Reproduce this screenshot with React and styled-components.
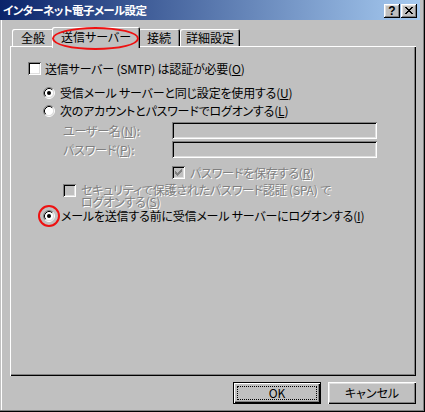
import React from 'react';
import styled, { createGlobalStyle } from 'styled-components';

const GlobalStyle = createGlobalStyle`
  html, body { margin: 0; padding: 0; background: #c0c0c0; }
  * { box-sizing: border-box; }
`;

const FONT = `"Noto Sans CJK JP", "Noto Sans", sans-serif`;

const Window = styled.div`
  width: 425px;
  height: 412px;
  background: #c0c0c0;
  box-shadow: inset -1px -1px 0 #000, inset -2px -2px 0 #808080, inset 1px 0 0 #c0c0c0, inset 2px 0 0 #fff;
  display: flex;
  flex-direction: column;
  font-family: ${FONT};
  font-size: 12px;
  font-feature-settings: "palt" 1;
  color: #000;
  overflow: hidden;
`;

const TitleBar = styled.div`
  height: 20px;
  margin-right: 5px;
  background: linear-gradient(to right, #0a246a, #a6caf0);
  display: flex;
  align-items: center;
  padding: 0 3px 0 3px;
  color: #fff;
  font-weight: bold;
  line-height: 20px;
`;

const TitleText = styled.span`
  flex: 1;
  font-size: 11.5px;
  letter-spacing: -0.6px;
`;

const CaptionGroup = styled.div`
  display: flex;
  gap: 1px;
  margin-top: 1px;
`;

const CaptionButton = styled.div`
  width: 16px;
  height: 14px;
  background: #c0c0c0;
  box-shadow: inset -1px -1px 0 #000, inset 1px 1px 0 #fff, inset -2px -2px 0 #808080, inset 2px 2px 0 #dfdfdf;
  display: flex;
  align-items: center;
  justify-content: center;
  color: #000;
  font-family: "Liberation Sans", sans-serif;
  font-weight: bold;
  font-size: 12px;
  line-height: 14px;
`;

const Body = styled.div`
  flex: 1;
  display: flex;
  flex-direction: column;
  padding: 7px 9px 0 10px;
`;

const TabRow = styled.div`
  display: flex;
  align-items: flex-start;
  height: 19px;
  padding-left: 2px;
`;

const Tab = styled.div`
  position: relative;
  z-index: ${p => (p.$active ? 2 : 1)};
  width: ${p => p.$w}px;
  height: ${p => (p.$active ? 21 : 17)}px;
  margin: ${p => (p.$active ? '0 -2px' : '2px 0 0 0')};
  background: #c0c0c0;
  border-radius: 2px 2px 0 0;
  box-shadow: inset 1px 1px 0 #fff, inset -1px 0 0 #000, inset -2px 0 0 #808080;
  display: flex;
  justify-content: center;
  padding-top: ${p => (p.$active ? 4 : 3)}px;
  line-height: 12px;
  white-space: nowrap;
`;

const TabEllipse = styled.div`
  position: absolute;
  left: 0;
  top: 0;
  width: 87px;
  height: 23px;
  border: 2px solid #ee1111;
  border-radius: 50%;
  pointer-events: none;
`;

const Panel = styled.div`
  width: 406px;
  height: 330px;
  background: #c0c0c0;
  box-shadow: inset 1px 1px 0 #fff, inset -1px -1px 0 #000, inset -2px -2px 0 #808080;
  padding-top: 16px;
  display: flex;
  flex-direction: column;
`;

const Row = styled.div`
  display: flex;
  align-items: ${p => (p.$top ? 'flex-start' : 'center')};
  min-height: ${p => p.$h || 13}px;
  margin-top: ${p => p.$mt || 0}px;
  padding-left: ${p => p.$indent}px;
  gap: ${p => (p.$gap != null ? p.$gap : 5)}px;
  line-height: 13px;
  white-space: nowrap;
`;

const Label = styled.span`
  color: ${p => (p.$disabled ? '#808080' : '#000')};
  text-shadow: ${p => (p.$disabled ? '1px 1px 0 #fff' : 'none')};
  width: ${p => (p.$w ? `${p.$w}px` : 'auto')};
  line-height: ${p => p.$lh || 13}px;
  letter-spacing: -0.2px;
`;

const CheckBox = styled.span`
  width: 13px;
  height: 13px;
  flex: none;
  display: block;
  background: ${p => (p.$disabled ? '#c0c0c0' : '#fff')};
  box-shadow: inset 1px 1px 0 #808080, inset -1px -1px 0 #fff, inset 2px 2px 0 #000, inset -2px -2px 0 #dfdfdf;
`;

const RadioWrap = styled.span`
  position: relative;
  display: block;
  width: 12px;
  height: 12px;
  flex: none;
`;

const RadioHighlight = styled.span`
  position: absolute;
  left: -5px;
  top: -5px;
  width: 22px;
  height: 22px;
  border: 2px solid #ee1111;
  border-radius: 50%;
`;

const TextField = styled.input`
  width: 205px;
  height: 17px;
  border: none;
  margin: 0;
  padding: 0;
  background: #c0c0c0;
  box-shadow: inset 1px 1px 0 #808080, inset -1px -1px 0 #fff, inset 2px 2px 0 #000, inset -2px -2px 0 #dfdfdf;
`;

const Footer = styled.div`
  display: flex;
  justify-content: flex-end;
  gap: 7px;
  margin-top: 6px;
`;

const Button = styled.button`
  position: relative;
  width: 88px;
  height: 22px;
  margin: 0;
  padding: 0;
  background: #c0c0c0;
  font-family: ${FONT};
  font-feature-settings: "palt" 1;
  font-size: 12px;
  line-height: 12px;
  color: #000;
  border: ${p => (p.$default ? '1px solid #000' : 'none')};
  box-shadow: ${p =>
    p.$default
      ? 'inset 1px 1px 0 #fff, inset -1px -1px 0 #000, inset -2px -2px 0 #808080'
      : 'inset 1px 1px 0 #fff, inset -1px -1px 0 #000, inset -2px -2px 0 #808080, inset 2px 2px 0 #dfdfdf'};
  &::after {
    content: '';
    display: ${p => (p.$default ? 'block' : 'none')};
    position: absolute;
    inset: 3px;
    border: 1px dotted #000;
  }
`;

const CheckMark = ({ color }) => (
  <svg width="13" height="13" viewBox="0 0 13 13" shapeRendering="crispEdges" style={{ display: 'block' }}>
    <path
      fill={color}
      d="M9 3h1v1h-1z M8 4h2v1h-2z M3 5h1v1h-1z M7 5h3v1h-3z M3 6h2v1h-2z M6 6h3v1h-3z M3 7h5v1h-5z M4 8h3v1h-3z M5 9h1v1h-1z"
    />
  </svg>
);

const Check = ({ checked, disabled }) => (
  <CheckBox $disabled={disabled}>{checked && <CheckMark color={disabled ? '#808080' : '#000'} />}</CheckBox>
);

const Radio = ({ checked, highlight }) => (
  <RadioWrap>
    <svg width="12" height="12" viewBox="0 0 12 12" style={{ display: 'block' }}>
      <circle cx="6" cy="6" r="4.5" fill="#fff" />
      <path d="M9.89 2.11 A5.5 5.5 0 0 0 2.11 9.89" fill="none" stroke="#808080" strokeWidth="1" />
      <path d="M2.11 9.89 A5.5 5.5 0 0 0 9.89 2.11" fill="none" stroke="#fff" strokeWidth="1" />
      <path d="M9.18 2.82 A4.5 4.5 0 0 0 2.82 9.18" fill="none" stroke="#000" strokeWidth="1" />
      <path d="M2.82 9.18 A4.5 4.5 0 0 0 9.18 2.82" fill="none" stroke="#dfdfdf" strokeWidth="1" />
      {checked && <circle cx="6" cy="6" r="2" fill="#000" />}
    </svg>
    {highlight && <RadioHighlight />}
  </RadioWrap>
);

const tabs = [
  { label: '全般', w: 42 },
  { label: '送信サーバー', w: 84, active: true },
  { label: '接続', w: 42 },
  { label: '詳細設定', w: 60 },
];

export default function App() {
  return (
    <>
      <GlobalStyle />
      <Window>
        <TitleBar>
          <TitleText>インターネット電子メール設定</TitleText>
          <CaptionGroup>
            <CaptionButton>?</CaptionButton>
            <CaptionButton>
              <svg width="8" height="7" viewBox="0 0 8 7" shapeRendering="crispEdges">
                <path fill="#000" d="M0 0h2v1h-2z M6 0h2v1h-2z M1 1h2v1h-2z M5 1h2v1h-2z M2 2h4v1h-4z M3 3h2v1h-2z M2 4h4v1h-4z M1 5h2v1h-2z M5 5h2v1h-2z M0 6h2v1h-2z M6 6h2v1h-2z" />
              </svg>
            </CaptionButton>
          </CaptionGroup>
        </TitleBar>
        <Body>
          <TabRow>
            {tabs.map(t => (
              <Tab key={t.label} $w={t.active ? t.w + 4 : t.w} $active={t.active}>
                {t.label}
                {t.active && <TabEllipse />}
              </Tab>
            ))}
          </TabRow>
          <Panel>
            <Row $indent={18} $gap={4}>
              <Check />
              <Label>送信サーバー (SMTP) は認証が必要(<u>O</u>)</Label>
            </Row>
            <Row $indent={33} $mt={11}>
              <Radio checked />
              <Label>受信メール サーバーと同じ設定を使用する(<u>U</u>)</Label>
            </Row>
            <Row $indent={33} $mt={5}>
              <Radio />
              <Label>次のアカウントとパスワードでログオンする(<u>L</u>)</Label>
            </Row>
            <Row $indent={53} $mt={5} $h={17} $gap={0}>
              <Label $disabled $w={109}>ユーザー名(<u>N</u>):</Label>
              <TextField disabled />
            </Row>
            <Row $indent={53} $mt={2} $h={17} $gap={0}>
              <Label $disabled $w={109}>パスワード(<u>P</u>):</Label>
              <TextField disabled />
            </Row>
            <Row $indent={162} $mt={8}>
              <Check checked disabled />
              <Label $disabled>パスワードを保存する(<u>R</u>)</Label>
            </Row>
            <Row $indent={53} $mt={5} $top $h={25}>
              <Check disabled />
              <Label $disabled $lh={12}>
                セキュリティで保護されたパスワード認証 (SPA) で
                <br />
                ログオンする(<u>S</u>)
              </Label>
            </Row>
            <Row $indent={33} $mt={0} $gap={6}>
              <Radio checked highlight />
              <Label>メールを送信する前に受信メール サーバーにログオンする(<u>I</u>)</Label>
            </Row>
          </Panel>
          <Footer>
            <Button $default>OK</Button>
            <Button>キャンセル</Button>
          </Footer>
        </Body>
      </Window>
    </>
  );
}
